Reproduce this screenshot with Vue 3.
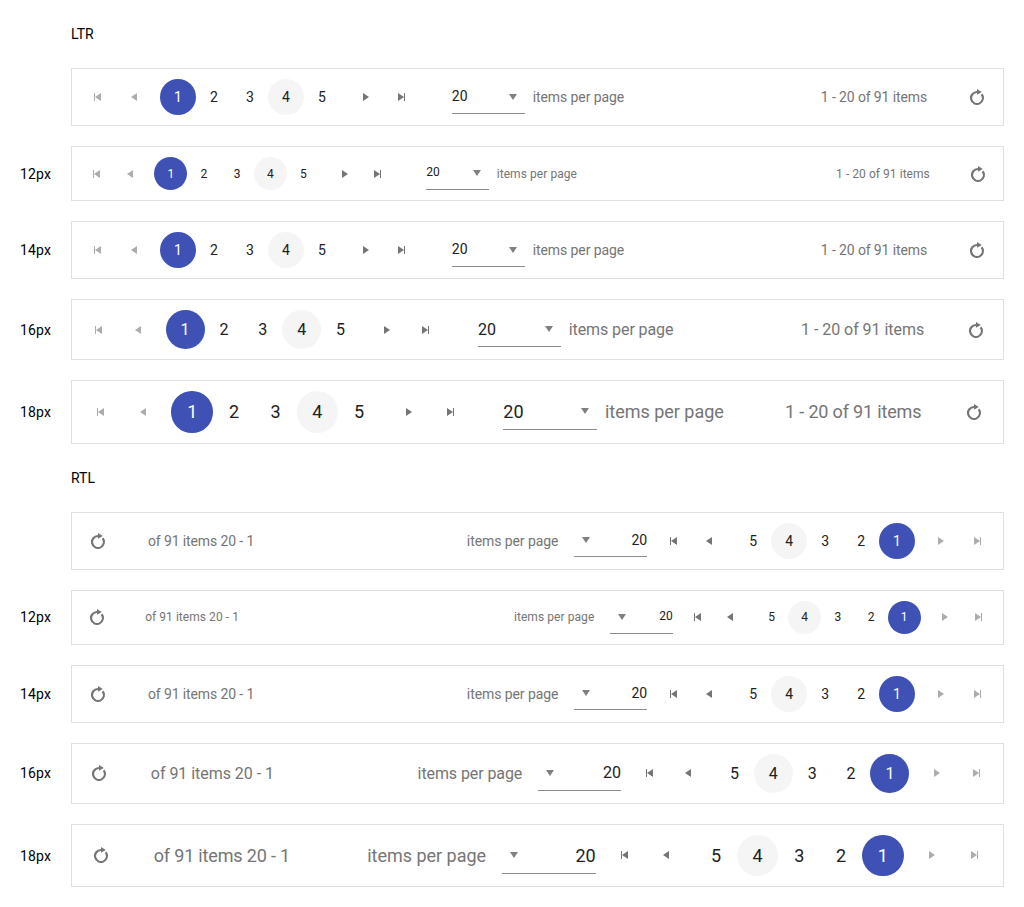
<script setup>
const sizes = [null, 12, 14, 16, 18]
const groups = [
  { title: 'LTR', dir: 'ltr' },
  { title: 'RTL', dir: 'rtl' },
]
</script>

<template>
  <main class="page">
    <section v-for="g in groups" :key="g.dir" class="group">
      <h2 class="title">{{ g.title }}</h2>
      <div v-for="(s, i) in sizes" :key="i" class="row">
        <span class="label">{{ s ? s + 'px' : '' }}</span>
        <div class="pager" :dir="g.dir" :class="[g.dir, 'size-' + (s || 14)]">
          <span class="btn arrow disabled">
            <svg class="icon" viewBox="0 0 16 16"><path d="M4 4h1v8H4zM11 4v8L5 8z" /></svg>
          </span>
          <span class="btn arrow disabled">
            <svg class="icon" viewBox="0 0 16 16"><path d="M11 4v8L5 8z" /></svg>
          </span>
          <div class="numbers">
            <span
              v-for="n in 5"
              :key="n"
              class="btn"
              :class="{ selected: n === 1, hover: n === 4 }"
            >{{ n }}</span>
          </div>
          <span class="btn arrow">
            <svg class="icon" viewBox="0 0 16 16"><path d="M5 4v8l6-4z" /></svg>
          </span>
          <span class="btn arrow last">
            <svg class="icon" viewBox="0 0 16 16"><path d="M10 4h1v8h-1zM4 4v8l6-4z" /></svg>
          </span>
          <div class="dropdown">
            <span class="value">20</span>
            <svg class="icon caret" viewBox="0 0 16 16"><path d="M4 5h8l-4 6z" /></svg>
          </div>
          <span class="per-page">items per page</span>
          <span class="info">1 - 20 of 91 items</span>
          <span class="btn refresh">
            <svg class="icon" viewBox="0 0 16 16">
              <path d="M13.4 4.6l-1.6 1.3A4.9 4.9 0 1 1 8 4.1v1.7L12.8 3 8 0v2a7 7 0 1 0 5.4 2.6z" />
            </svg>
          </span>
        </div>
      </div>
    </section>
  </main>
</template>

<style>
body {
  background: #fff;
}
</style>

<style scoped>
.page {
  padding: 0 20px;
  font-family: Roboto, sans-serif;
  font-size: 14px;
  line-height: 20px;
  color: #000;
}
.group {
  display: flex;
  flex-direction: column;
}
.title {
  margin: 24px 0 24px 51px;
  font-size: 14px;
  font-weight: 400;
}
.row {
  display: flex;
  align-items: center;
  margin-bottom: 20px;
}
.group .row:last-child {
  margin-bottom: 0;
}
.label {
  width: 51px;
  flex: none;
  letter-spacing: 0.15px;
}
.row:last-child .label {
  margin-top: 0.6px;
}
.pager {
  flex: none;
  box-sizing: border-box;
  width: 933px;
  padding: 10px 8px;
  border: 1px solid #e0e0e0;
  display: flex;
  align-items: center;
  color: #757575;
}
.size-12 {
  --dropdown-height: 33px;
  --page-tracking: 0.07px;
  --info-tracking: 0.05px;
  font-size: 12px;
  line-height: 18px;
}
.size-14 {
  --dropdown-height: 33.1px;
  --page-tracking: -0.08px;
  --info-tracking: -0.12px;
  font-size: 14px;
  line-height: 20px;
}
.size-16 {
  --dropdown-height: 35px;
  --page-tracking: -0.09px;
  --info-tracking: -0.04px;
  font-size: 16px;
  line-height: 23px;
}
.size-18 {
  --dropdown-height: 36.6px;
  --page-tracking: -0.02px;
  --info-tracking: -0.17px;
  font-size: 18px;
  line-height: 25.714px;
}
.btn {
  box-sizing: border-box;
  width: calc(1.42857em + 16px);
  height: calc(1.42857em + 16px);
  flex: none;
  display: flex;
  align-items: center;
  justify-content: center;
  border-radius: 50%;
}
.size-18 .last {
  padding-inline-start: 1px;
}
.numbers {
  display: flex;
  margin: 0 8px;
  color: #212121;
}
.selected {
  background: #3f51b5;
  color: #fff;
}
.hover {
  background: #f5f5f5;
}
.icon {
  width: 16px;
  height: 16px;
  fill: currentColor;
  flex: none;
}
.disabled {
  color: #acacac;
}
.rtl .arrow .icon {
  transform: scaleX(-1);
}
.dropdown {
  box-sizing: border-box;
  width: 5.2em;
  height: var(--dropdown-height);
  margin-inline-start: 32px;
  margin-inline-end: 8px;
  padding-inline-end: 4px;
  padding-bottom: 1px;
  border-bottom: 1px solid #8c8c8c;
  display: flex;
  align-items: center;
  justify-content: space-between;
}
.rtl .dropdown {
  margin-inline-start: 8px;
  margin-inline-end: 16px;
}
.value {
  color: #212121;
}
.size-12 .value {
  line-height: 17.14px;
}
.size-16 .value {
  margin-top: 1px;
  margin-inline-start: 0.4px;
}
.size-18 .value {
  margin-top: 2px;
}
.caret {
  margin-top: 1.2px;
  color: #808080;
}
.per-page {
  letter-spacing: var(--page-tracking);
}
.info {
  margin-inline-start: auto;
  margin-inline-end: 32px;
  letter-spacing: var(--info-tracking);
}
</style>
